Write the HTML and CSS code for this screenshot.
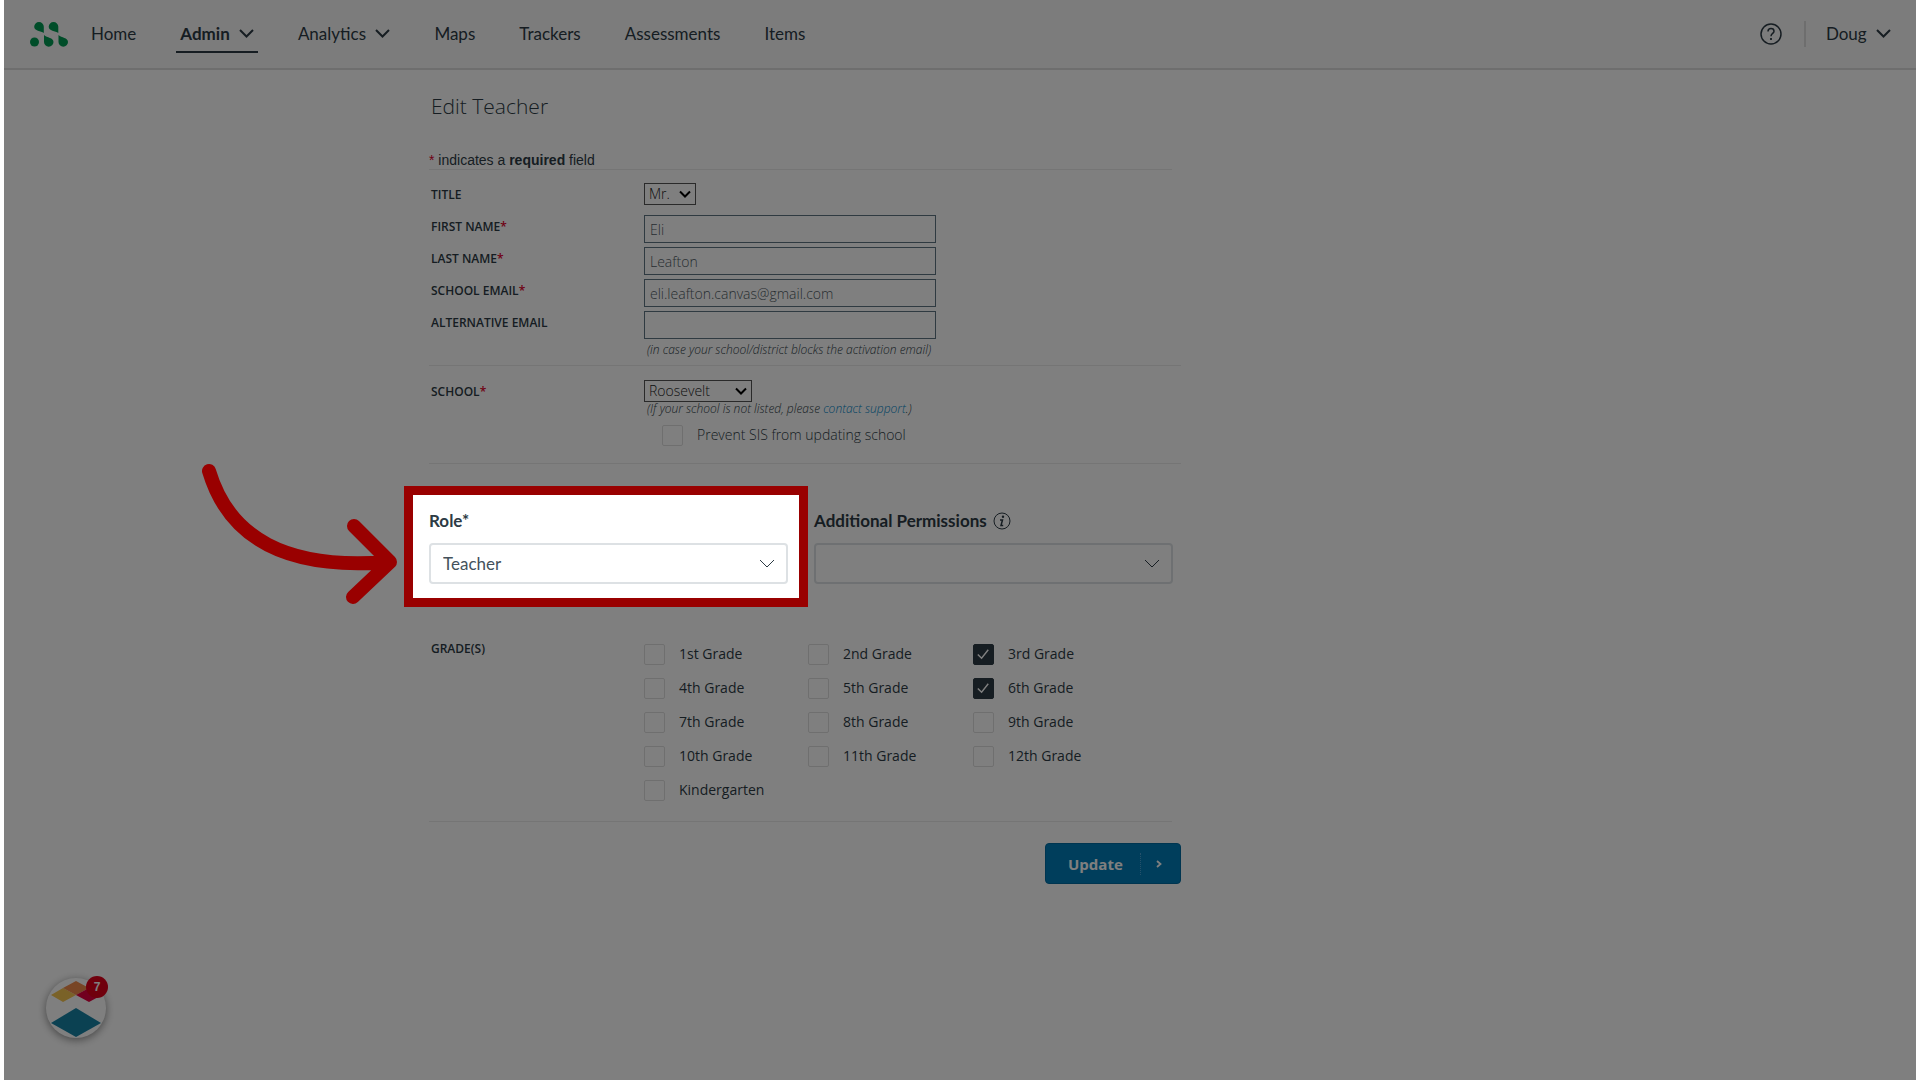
FILE: index.html
```html
<!DOCTYPE html>
<html lang="en">
<head>
<meta charset="utf-8">
<title>Edit Teacher</title>
<link rel="stylesheet" href="styles.css">
</head>
<body>
<div class="page">
  <header class="topbar">
    <a class="logo" href="#" aria-label="Dashboard">
      <svg width="38" height="25" viewBox="0 0 38 25" fill="#009a52">
        <path d="M9 0a4.800 4.800 0 0 1 4.800 4.800v6.200C11 9 4.200 9 4.200 4.800a4.800 4.800 0 0 1 4.800-4.800z"/>
        <path d="M23.500 0a4.800 4.800 0 0 1 4.800 4.800v6.200c-2.800-2-9.600-2-9.600-6.200a4.800 4.800 0 0 1 4.800-4.800z"/>
        <circle cx="4.500" cy="20" r="4.500"/>
        <path d="M14 13c3 3 9.500 2.500 9.500 7a4.750 4.750 0 0 1-9.500 0z"/>
        <path d="M28.500 13c3 3 9.500 2.500 9.500 7a4.750 4.750 0 0 1-9.500 0z"/>
      </svg>
    </a>
    <nav class="nav">
      <a href="#">Home</a>
      <a class="current" href="#">Admin <svg class="caret" viewBox="0 0 15 9"><path d="M1 1l6.500 6.500L14 1"/></svg></a>
      <a href="#">Analytics <svg class="caret" viewBox="0 0 15 9"><path d="M1 1l6.500 6.500L14 1"/></svg></a>
      <a href="#">Maps</a>
      <a href="#">Trackers</a>
      <a href="#">Assessments</a>
      <a href="#">Items</a>
    </nav>
    <div class="account">
      <a class="help" href="#" aria-label="Help">
        <svg width="22" height="22" viewBox="0 0 22 22" fill="none" stroke="#2d3b45" stroke-width="1.500"><circle cx="11" cy="11" r="10"/><path d="M8 8.500C8 6.500 9.300 5.500 11 5.500s3 1 3 2.700c0 2.200-3 2.300-3 5"/><path d="M11 15v2" stroke-width="1.800"/></svg>
      </a>
      <a class="user" href="#">Doug <svg class="caret" viewBox="0 0 15 9"><path d="M1 1l6.500 6.500L14 1"/></svg></a>
    </div>
  </header>

  <main class="content">
    <form class="form">
      <h1>Edit Teacher</h1>
      <p class="note"><span class="req">*</span> indicates a <b>required</b> field</p>

      <section class="block person">
        <div class="row title-row">
          <label for="title">Title</label>
          <span class="select title-select"><select id="title"><option>Mr.</option></select><svg viewBox="0 0 12 8"><path d="M1 1.500l5 5 5-5"/></svg></span>
        </div>
        <div class="row"><label for="first">First Name<span class="req">*</span></label><input id="first" type="text" value="Eli"></div>
        <div class="row"><label for="last">Last Name<span class="req">*</span></label><input id="last" type="text" value="Leafton"></div>
        <div class="row"><label for="email">School Email<span class="req">*</span></label><input id="email" type="email" value="eli.leafton.canvas@gmail.com"></div>
        <div class="row"><label for="alt">Alternative Email</label><input id="alt" type="email"></div>
        <p class="hint">(in case your school/district blocks the activation email)</p>
      </section>

      <section class="block school">
        <div class="row school-row">
          <label for="school">School<span class="req">*</span></label>
          <span class="select school-select"><select id="school"><option>Roosevelt</option></select><svg viewBox="0 0 12 8"><path d="M1 1.500l5 5 5-5"/></svg></span>
        </div>
        <p class="hint">(If your school is not listed, please <a href="#">contact support</a>.)</p>
        <label class="check sis"><input type="checkbox"><span>Prevent SIS from updating school</span></label>
      </section>

      <section class="roles">
        <div class="field role">
          <label for="role">Role*</label>
          <span class="select big"><select id="role"><option>Teacher</option></select><svg viewBox="0 0 16 9"><path d="M1 1l7 7 7-7"/></svg></span>
          <div class="spotlight"></div>
          <svg class="arrow" viewBox="0 0 196 143" fill="none" stroke="#900" stroke-width="14" stroke-linecap="round" stroke-linejoin="round"><path d="M8 8C28 75 85 107 186 99M153 63l36 36-37 35"/></svg>
        </div>
        <div class="field">
          <label for="perm">Additional Permissions
            <svg class="info" width="18" height="18" viewBox="0 0 18 18"><circle cx="9" cy="9" r="8" fill="none" stroke="#2d3b45" stroke-width="1"/><circle cx="10" cy="4.700" r="1.200" fill="#2d3b45"/><path d="M7 8h2.500L8 13.500h2.200" fill="none" stroke="#2d3b45" stroke-width="1.500"/></svg>
          </label>
          <span class="select big"><select id="perm"><option></option></select><svg viewBox="0 0 16 9"><path d="M1 1l7 7 7-7"/></svg></span>
        </div>
      </section>

      <fieldset class="grades" aria-labelledby="grades-caption">
        <span class="caption" id="grades-caption">Grade(s)</span>
        <div class="grid">
          <label class="check"><input type="checkbox"><span>1st Grade</span></label>
          <label class="check"><input type="checkbox"><span>2nd Grade</span></label>
          <label class="check"><input type="checkbox" checked><span>3rd Grade</span></label>
          <label class="check"><input type="checkbox"><span>4th Grade</span></label>
          <label class="check"><input type="checkbox"><span>5th Grade</span></label>
          <label class="check"><input type="checkbox" checked><span>6th Grade</span></label>
          <label class="check"><input type="checkbox"><span>7th Grade</span></label>
          <label class="check"><input type="checkbox"><span>8th Grade</span></label>
          <label class="check"><input type="checkbox"><span>9th Grade</span></label>
          <label class="check"><input type="checkbox"><span>10th Grade</span></label>
          <label class="check"><input type="checkbox"><span>11th Grade</span></label>
          <label class="check"><input type="checkbox"><span>12th Grade</span></label>
          <label class="check"><input type="checkbox"><span>Kindergarten</span></label>
        </div>
      </fieldset>

      <button class="update" type="submit"><span>Update</span><svg width="6" height="8" viewBox="0 0 6 8"><path d="M1 1l3.500 3L1 7" fill="none" stroke="#fff" stroke-width="1.800"/></svg></button>
    </form>
  </main>

  <button class="launcher" type="button" aria-label="Open resource center, 7 new">
    <svg width="60" height="60" viewBox="0 0 60 60"><path d="M5 17l12-7 13 7-13 7z" fill="#f5c451"/><path d="M17 10l13-7 13 7-13 7z" fill="#f08a4b"/><path d="M30 17l13-7 13 7-13 7z" fill="#e4003f"/><path d="M5 45l25-15 25 15-25 14z" fill="#1782a5"/></svg>
    <span class="count">7</span>
  </button>
</div>
</body>
</html>
```
FILE: styles.css
```css
* { box-sizing: border-box; }
body {
  margin: 0;
  background: #fff;
  color: #2d3b45;
  font-family: "Open Sans", sans-serif;
}
a { color: inherit; text-decoration: none; }
h1, p { margin: 0; }

.page {
  position: relative;
  min-height: 100vh;
  margin: 0 4px;
  overflow: hidden;
}

/* Top navigation */
.topbar {
  display: flex;
  align-items: center;
  height: 70px;
  padding: 0 25px 0 26px;
  background: #f8f8f8;
  border-bottom: 2px solid #dcdcdc;
  font: 17px/24px Lato, sans-serif;
}
.logo { display: flex; }
.nav {
  display: flex;
  gap: 36px;
  flex: 1;
  margin-left: 19px;
}
.nav a {
  padding: 7px 4px 5px;
  border-bottom: 2px solid transparent;
}
.nav .current { font-weight: 700; border-color: #2d3b45; }
.caret {
  width: 15px;
  height: 9px;
  margin-left: 5px;
  vertical-align: 2px;
  fill: none;
  stroke: #2d3b45;
  stroke-width: 2;
}
.account { display: flex; align-items: center; gap: 22px; }
.help { display: flex; }
.user { padding: 1px 0 1px 20px; border-left: 2px solid #dcdcdc; }

/* Form */
.content {
  max-width: 1062px;
  margin: 0 auto;
}
.form { width: 752px; max-width: 100%; }
h1 {
  padding: 21px 2px 0;
  font-size: 21px;
  font-weight: 300;
  line-height: 30px;
}
.note {
  width: 743px;
  max-width: 100%;
  margin-top: 31px;
  border-bottom: 1px solid #eaeaea;
  font: 14px/17px "Liberation Sans", sans-serif;
}
.req { color: #e0002b; }
.block { border-bottom: 1px solid #eaeaea; }
.person { padding: 13px 0 9px; }
.school { padding: 14px 0 17px; }
.row {
  display: grid;
  grid-template-columns: 213px 1fr;
  align-items: start;
  justify-items: start;
  padding-left: 2px;
  margin-bottom: 4px;
}
.title-row { margin-bottom: 8px; }
.school-row { height: 22px; margin-bottom: 0; }
.row label, .caption {
  font-size: 12px;
  font-weight: 600;
  line-height: 24px;
  text-transform: uppercase;
}
input[type="text"], input[type="email"] {
  width: 292px;
  height: 28px;
  padding: 0 5px;
  border: 1px solid #5f7482;
  background: #fff;
  color: #4f5b64;
  font: 300 14px/20px "Open Sans", sans-serif;
}
.select { display: inline-grid; align-items: center; }
.select select, .select svg { grid-area: 1 / 1; }
.select svg {
  justify-self: end;
  width: 12px;
  height: 8px;
  margin-right: 5px;
  fill: none;
  stroke: #000;
  stroke-width: 2;
  pointer-events: none;
}
select {
  appearance: none;
  width: 100%;
  height: 22px;
  padding: 0 4px;
  border: 1px solid #555;
  border-radius: 0;
  background: #fff;
  color: #222;
  font: 300 14px/20px "Open Sans", sans-serif;
}
.title-select { width: 52px; }
.school-select { width: 108px; }
.hint {
  padding-left: 218px;
  font-size: 12px;
  font-style: italic;
  font-weight: 300;
  line-height: 13px;
}
.hint a { color: #0085c7; }
.check {
  display: flex;
  align-items: center;
  gap: 14px;
  font-size: 14px;
  line-height: 22px;
}
.check input {
  appearance: none;
  width: 21px;
  height: 21px;
  margin: 0;
  border: 1px solid #dedede;
  border-radius: 2px;
}
.check input:checked {
  border-color: #2d3b45;
  background: #2d3b45 url("data:image/svg+xml,%3Csvg xmlns='http://www.w3.org/2000/svg' viewBox='0 0 20 20'%3E%3Cpath d='M4 10l4 4 7-9' fill='none' stroke='white' stroke-width='1.500'/%3E%3C/svg%3E") center / 19px;
}
.sis { padding-left: 233px; margin-top: 9px; font-weight: 300; }

/* Role and permissions */
.roles {
  display: grid;
  grid-template-columns: 359px 359px;
  gap: 26px;
  padding-top: 45px;
}
.field { font-family: Lato, sans-serif; }
.field label {
  display: flex;
  align-items: center;
  gap: 6px;
  margin-bottom: 10px;
  font-size: 17px;
  font-weight: 700;
  line-height: 24px;
}
.role { position: relative; }
.big { display: grid; }
.big select {
  height: 41px;
  padding: 0 12px;
  border: 2px solid #dde1e4;
  border-radius: 4px;
  color: #44515b;
  font: 17px/24px Lato, sans-serif;
}
.big svg {
  width: 16px;
  height: 9px;
  margin-right: 13px;
  stroke: #2d3b45;
  stroke-width: 1;
}

/* Walkthrough step: dims everything but the role field */
.spotlight {
  position: absolute;
  inset: -23px -20px -23px -25px;
  z-index: 10;
  border: 9px solid #900;
  box-shadow: 0 0 0 4000px rgba(0, 0, 0, .5);
  pointer-events: none;
}
.arrow {
  position: absolute;
  top: -46px;
  right: 391px;
  z-index: 11;
  width: 196px;
  height: 143px;
  pointer-events: none;
}

/* Grades */
.grades {
  display: grid;
  grid-template-columns: 213px 1fr;
  width: 743px;
  max-width: 100%;
  margin: 0;
  padding: 53px 0 20px 2px;
  border: 0;
  border-bottom: 1px solid #eaeaea;
}
.grid {
  display: grid;
  grid-template-columns: 164px 165px 1fr;
  row-gap: 12px;
  padding-top: 6px;
}
.update {
  display: flex;
  align-items: center;
  width: 136px;
  height: 41px;
  margin: 21px 0 0 auto;
  padding: 0 18px 0 22px;
  border: 1px solid #006ba0;
  border-radius: 4px;
  background: #007cb8;
  color: #fff;
  font: 700 15px/22px "Open Sans", sans-serif;
}
.update span {
  flex: 1;
  margin-right: 15px;
  border-right: 1px dotted #4aa3d6;
  text-align: left;
}

/* Resource launcher */
.launcher {
  position: absolute;
  bottom: 42px;
  left: 42px;
  width: 60px;
  height: 60px;
  padding: 0;
  border: 0;
  border-radius: 50%;
  background: #fff;
  box-shadow: 0 2px 8px rgba(0, 0, 0, .45);
}
.launcher svg { display: block; border-radius: 50%; }
.count {
  position: absolute;
  top: -2px;
  right: -2px;
  width: 22px;
  height: 22px;
  border-radius: 50%;
  background: #e0001b;
  color: #fff;
  font: 700 12px/22px "Liberation Sans", sans-serif;
  text-align: center;
}
```
